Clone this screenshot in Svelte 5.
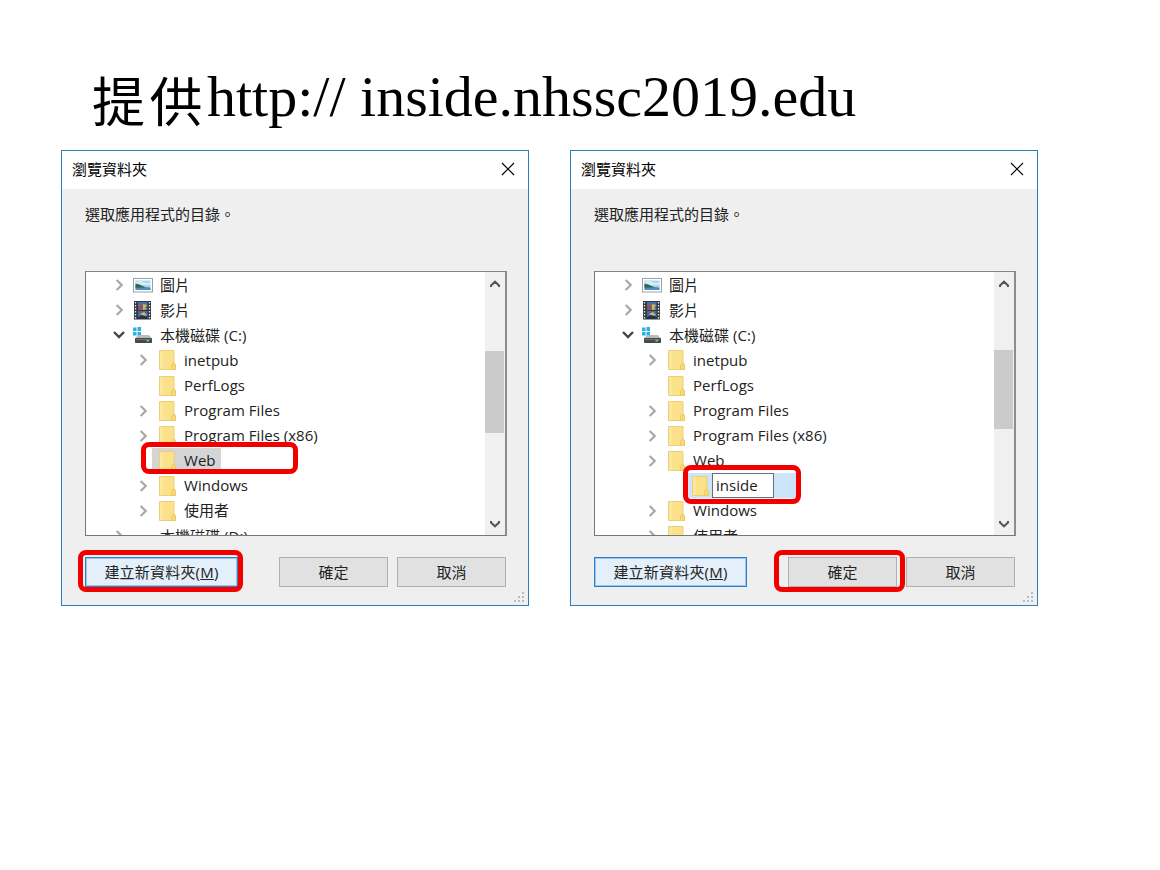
<script>
  const base = [
    { text: '圖片', icon: 'picture', level: 0, arrow: 'right', cjk: true },
    { text: '影片', icon: 'video', level: 0, arrow: 'right', cjk: true },
    { text: '本機磁碟 (C:)', icon: 'drive', level: 0, arrow: 'down', cjk: true },
    { text: 'inetpub', icon: 'folder', level: 1, arrow: 'right' },
    { text: 'PerfLogs', icon: 'folder', level: 1 },
    { text: 'Program Files', icon: 'folder', level: 1, arrow: 'right' },
    { text: 'Program Files (x86)', icon: 'folder', level: 1, arrow: 'right' }
  ];
  const windows = { text: 'Windows', icon: 'folder', level: 1, arrow: 'right' };
  const users = { text: '使用者', icon: 'folder', level: 1, arrow: 'right', cjk: true };

  const dialogs = [
    {
      id: 'select',
      rows: [
        ...base,
        { text: 'Web', icon: 'folder', level: 1, selected: true },
        windows,
        users,
        { text: '本機磁碟 (D:)', icon: 'none', level: 0, arrow: 'right', cjk: true }
      ],
      marks: ['mark-web', 'mark-create']
    },
    {
      id: 'rename',
      rows: [
        ...base,
        { text: 'Web', icon: 'folder', level: 1, arrow: 'right' },
        { text: 'inside', icon: 'folder', level: 2, editing: true },
        windows,
        users
      ],
      marks: ['mark-inside', 'mark-ok']
    }
  ];
</script>

<main>
  <h1><span class="kai">提供</span><span>http:// inside.nhssc2019.edu</span></h1>
  <div class="dialogs">
    {#each dialogs as d}
      <section class="dialog {d.id}">
        <header>
          <span>瀏覽資料夾</span>
          <svg width="14" height="14" viewBox="0 0 14 14"><path d="M1 1L13 13M13 1L1 13" stroke="#000" stroke-width="1.15" fill="none" /></svg>
        </header>
        <div class="body">
          <p>選取應用程式的目錄。</p>
          <div class="list">
            <div class="rows">
              {#each d.rows as r}
                <div class="row level{r.level}" class:selected={r.selected} class:editing={r.editing}>
                  <span class="arrow">
                    {#if r.arrow === 'right'}
                      <svg width="14" height="14" viewBox="0 0 14 14"><path d="M4.7 2L9.7 7L4.7 12" stroke="#a8a8a8" stroke-width="2.2" fill="none" /></svg>
                    {:else if r.arrow === 'down'}
                      <svg width="14" height="14" viewBox="0 0 14 14"><path d="M2 4L7 9L12 4" stroke="#454545" stroke-width="2.4" fill="none" /></svg>
                    {/if}
                  </span>
                  <span class="icon">
                    {#if r.icon === 'folder'}
                      <svg width="20" height="20" viewBox="0 0 20 20">
                        <path d="M2.5.5H17V13l1.500 1.500v5h-16z" fill="#fbe18a" stroke="#ecd077" />
                        <path d="M3 1h3v18H3z" fill="#fde79c" />
                        <path d="M14.500 19.500V15l2.500-2 1.500 2v4.500z" fill="#f9d972" stroke="#ebcb67" />
                      </svg>
                    {:else if r.icon === 'picture'}
                      <svg width="20" height="20" viewBox="0 0 20 20">
                        <rect x=".5" y="3.500" width="19" height="13.500" fill="#fff" stroke="#9a9fa3" />
                        <rect x="2.500" y="5.500" width="15" height="9.500" fill="#a9d5ef" />
                        <path d="M2.500 7q4-2 8 0t7 0v3h-15z" fill="#d5edf7" />
                        <path d="M2.500 10.500l5 .5 5 1 5 .5V15h-15z" fill="#4e91b8" />
                        <path d="M2.500 8.500l4 1 6 3-10 .3z" fill="#2f6657" />
                      </svg>
                    {:else if r.icon === 'video'}
                      <svg width="20" height="20" viewBox="0 0 20 20">
                        <rect x="1" y="1" width="17" height="18.500" fill="#33383d" />
                        <path d="M2.500 2v17M16.500 2v17" stroke="#e6e8e9" stroke-width="1.300" stroke-dasharray="1.500 1.500" />
                        <rect x="5" y="2" width="9.500" height="8" fill="#4770ad" />
                        <rect x="5" y="11" width="9.500" height="8" fill="#3e69b3" />
                        <path d="M5 6l4-1 1 4-5 1z" fill="#ad494b" />
                        <path d="M10 4l4 1-2 3 2 1-4 1zM7 14l4-2 3 3-4 1z" fill="#ddb83d" />
                        <path d="M5 17l4-2 5.500 2v2H5z" fill="#23314f" />
                      </svg>
                    {:else if r.icon === 'drive'}
                      <svg width="20" height="20" viewBox="0 0 20 20">
                        <path d="M0 2.500h3.500V6H0zM4.500 2H8v4H4.500zM0 7h3.500v3.500H0zM4.500 7H8v4H4.500z" fill="#22b5e4" />
                        <path d="M5 10h11l3 3.500H2z" fill="#b8bcbe" />
                        <rect x="2" y="13" width="17" height="5" rx=".8" fill="#45494b" />
                        <rect x="3" y="14" width="15" height="1" fill="#6e7375" />
                        <rect x="13.500" y="15" width="2.500" height="1.500" fill="#60dd6d" />
                      </svg>
                    {/if}
                  </span>
                  <span class="label" class:cjk={r.cjk}>{r.text}</span>
                </div>
              {/each}
            </div>
            <div class="scroll">
              <svg width="12" height="10" viewBox="0 0 12 10"><path d="M2 8V6.500L6 2.700L10 6.500V8" stroke="#555" stroke-width="2" fill="none" /></svg>
              <div class="thumb"></div>
              <svg class="end" width="12" height="10" viewBox="0 0 12 10"><path d="M2 2V3.500L6 7.300L10 3.500V2" stroke="#555" stroke-width="2" fill="none" /></svg>
            </div>
          </div>
          <footer>
            <button class="create">建立新資料夾(<u>M</u>)</button>
            <button class="ok">確定</button>
            <button>取消</button>
          </footer>
        </div>
        <svg class="grip" width="12" height="12" viewBox="0 0 12 12">
          <path d="M9 0h2v2H9zM5 4h2v2H5zM9 4h2v2H9zM1 8h2v2H1zM5 8h2v2H5zM9 8h2v2H9z" fill="#bcbcbc" />
        </svg>
        {#each d.marks as m}<i class="mark {m}"></i>{/each}
      </section>
    {/each}
  </div>
</main>

<style>
  :global(body) { margin: 0; background: #fff; }
  main {
    width: 1160px; height: 870px; box-sizing: border-box; padding: 62px 0 0 61px; overflow: hidden;
    font-family: "Open Sans", "Noto Sans CJK TC", sans-serif; color: #222;
  }
  h1 {
    margin: 0; padding-left: 31px; height: 88px; white-space: nowrap; display: flex; align-items: flex-start;
    font: 400 58px/70px "Liberation Serif", serif; color: #000;
  }
  .kai { font: 400 53px/74px "Noto Sans CJK TC", sans-serif; letter-spacing: 4.500px; }
  .dialogs { display: flex; gap: 41px; }
  .dialog {
    position: relative; width: 468px; height: 456px; box-sizing: border-box;
    border: 1px solid #2d7fb8; background: #efefef;
  }
  header {
    height: 38px; background: #fff; display: flex; align-items: center; justify-content: space-between;
    box-sizing: border-box; padding: 0 13px 2px 10px; font: 15px/34px "Noto Sans CJK TC", sans-serif; color: #000;
  }
  .body { padding: 0 21px 0 23px; }
  p { margin: 0; height: 82px; font: 15px/49px "Noto Sans CJK TC", sans-serif; color: #222; }
  .list {
    box-sizing: border-box; width: 422px; height: 265px; border: 1px solid #777; border-width: 1px 2px 1px 1px;
    border-color: #858585 #8d8d8d #777 #777; background: #fff; display: flex; overflow: hidden;
    margin-bottom: 21px;
  }
  .rows { flex: 1; overflow: hidden; padding-top: .6px; }
  .row { height: 25.100px; display: flex; align-items: center; padding-left: 26px; }
  .level1 { padding-left: 50px; }
  .level2 { padding-left: 74px; }
  .arrow { width: 14px; height: 14px; display: flex; }
  .icon { width: 20px; height: 20px; display: flex; margin: 0 7px; }
  .label { font-size: 15px; line-height: 25px; white-space: nowrap; letter-spacing: .03px; }
  .selected .icon, .selected .label { background: #d5d5d5; height: 25px; align-items: center; }
  .selected .icon { padding: 0 7px 0 5px; margin: 0 0 0 2px; }
  .selected .label { padding-right: 5px; }
  .editing .icon { background: #cce5fb; margin: 0; padding: 0 2px 0 7px; height: 25px; align-items: center; }
  .editing .label {
    box-sizing: border-box; width: 62px; height: 25px; line-height: 23px; border: 1px solid #6a6f75;
    padding-left: 3px; background: #fff; box-shadow: 22px 0 #cce5fb;
  }
  .scroll {
    width: 20px; background: #f0f0f0; display: flex; flex-direction: column; align-items: center;
    padding: 7px 1px 6px 0; box-sizing: border-box;
  }
  .scroll svg { flex: none; }
  .thumb { width: 19px; height: 82px; margin-top: 62px; background: #cbcbcb; }
  .rename .thumb { height: 79px; margin-top: 61px; }
  .end { margin-top: auto; }
  footer { display: flex; height: 31px; }
  button {
    box-sizing: border-box; width: 109px; height: 30px; padding: 0; border: 1px solid #b0b0b0; border-radius: 0;
    background: #e1e1e1; color: #222; font: 15px/26px "Noto Sans CJK TC", sans-serif; white-space: nowrap;
  }
  .create { width: 153px; border: 1px solid #2d7fc9; box-shadow: inset 0 0 0 1px #9dc6e9; background: #e3effa; font-family: "Open Sans", "Noto Sans CJK TC", sans-serif; line-height: 26px; letter-spacing: .2px; }
  .ok { margin: 0 9px 0 41px; }
  .grip { position: absolute; right: 3px; bottom: 1px; }
  .mark { position: absolute; box-sizing: border-box; border: 5px solid #f20000; border-radius: 8px; }
  .mark-web { left: 79px; top: 291px; width: 157px; height: 32px; }
  .mark-create { left: 16px; top: 399px; width: 165px; height: 42px; }
  .mark-inside { left: 112px; top: 314px; width: 118px; height: 39px; }
  .mark-ok { left: 203px; top: 399px; width: 131px; height: 42px; }
</style>
